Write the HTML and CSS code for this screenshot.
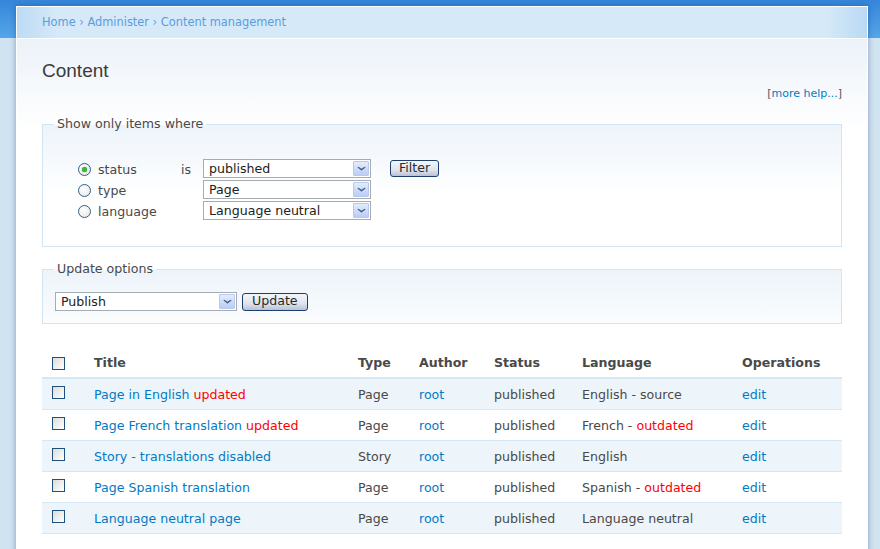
FILE: index.html
```html
<!DOCTYPE html>
<html lang="en">
<head>
    <meta charset="UTF-8">
    <title>Content</title>
    <link rel="stylesheet" href="styles.css">
</head>
<body>

<div class="page">
    <div class="breadcrumb">
        <a href="#">Home</a> › <a href="#">Administer</a> › <a href="#">Content management</a>
    </div>
    <div class="main">
        <h2>Content</h2>
        <div class="more-help">[<a href="#">more help...</a>]</div>

        <fieldset class="filter-box">
            <legend>Show only items where</legend>
            <div class="filters">
                <div class="radios">
                    <label class="radio-row"><span class="radio checked"></span>status</label>
                    <label class="radio-row"><span class="radio"></span>type</label>
                    <label class="radio-row"><span class="radio"></span>language</label>
                </div>
                <div class="is">is</div>
                <div class="selects">
                    <div class="select">published<span class="arrow"></span></div>
                    <div class="select">Page<span class="arrow"></span></div>
                    <div class="select">Language neutral<span class="arrow"></span></div>
                </div>
                <div class="actions">
                    <span class="button">Filter</span>
                </div>
            </div>
        </fieldset>

        <fieldset class="update-box">
            <legend>Update options</legend>
            <div class="update-row">
                <div class="select wide">Publish<span class="arrow"></span></div>
                <span class="button">Update</span>
            </div>
        </fieldset>

        <table class="content-table">
            <thead>
                <tr>
                    <th class="col-check"><span class="checkbox"></span></th>
                    <th class="col-title">Title</th>
                    <th class="col-type">Type</th>
                    <th class="col-author">Author</th>
                    <th class="col-status">Status</th>
                    <th class="col-lang">Language</th>
                    <th class="col-ops">Operations</th>
                </tr>
            </thead>
            <tbody>
                <tr class="odd">
                    <td><span class="checkbox"></span></td>
                    <td><a href="#">Page in English</a> <span class="marker">updated</span></td>
                    <td>Page</td>
                    <td><a href="#">root</a></td>
                    <td>published</td>
                    <td>English - source</td>
                    <td><a href="#">edit</a></td>
                </tr>
                <tr class="even">
                    <td><span class="checkbox"></span></td>
                    <td><a href="#">Page French translation</a> <span class="marker">updated</span></td>
                    <td>Page</td>
                    <td><a href="#">root</a></td>
                    <td>published</td>
                    <td>French - <span class="marker">outdated</span></td>
                    <td><a href="#">edit</a></td>
                </tr>
                <tr class="odd">
                    <td><span class="checkbox"></span></td>
                    <td><a href="#">Story - translations disabled</a></td>
                    <td>Story</td>
                    <td><a href="#">root</a></td>
                    <td>published</td>
                    <td>English</td>
                    <td><a href="#">edit</a></td>
                </tr>
                <tr class="even">
                    <td><span class="checkbox"></span></td>
                    <td><a href="#">Page Spanish translation</a></td>
                    <td>Page</td>
                    <td><a href="#">root</a></td>
                    <td>published</td>
                    <td>Spanish - <span class="marker">outdated</span></td>
                    <td><a href="#">edit</a></td>
                </tr>
                <tr class="odd">
                    <td><span class="checkbox"></span></td>
                    <td><a href="#">Language neutral page</a></td>
                    <td>Page</td>
                    <td><a href="#">root</a></td>
                    <td>published</td>
                    <td>Language neutral</td>
                    <td><a href="#">edit</a></td>
                </tr>
            </tbody>
        </table>
    </div>
</div>

</body>
</html>
```

FILE: styles.css
```css
/* page de base */
body {
    margin: 0;
    padding: 0;
    font-family: "DejaVu Sans", Verdana, sans-serif;
    font-size: 12.6px;
    color: #494949;
    background: linear-gradient(#3586da, #55a5e9 38px, #d0e3f1 38px) no-repeat;
    background-color: #d0e3f1;
    height: 549px;
    overflow: hidden;
}

a {
    color: #027ac6;
    text-decoration: none;
}

.page {
    margin: 6px 12px 0 16px;
    border-left: 1px solid #fff;
    border-right: 1px solid #fff;
    border-top: 1px solid #fff;
    box-shadow: 0 0 6px rgba(0, 30, 90, 0.35);
    background: #fff;
    height: 560px;
}

.breadcrumb {
    height: 31px;
    line-height: 31px;
    padding-left: 25px;
    font-size: 11.4px;
    color: #6aa3dc;
    background: linear-gradient(to right, #bcdbf4, #d5e9f8 40px, #d5e9f8 calc(100% - 40px), #b9d9f4);
    border-bottom: 1px solid #fff;
}

.breadcrumb a {
    color: #5d9cdc;
}

.main {
    padding: 0 25px;
    background: linear-gradient(#ecf2f9, #fff 90px) no-repeat;
}

h2 {
    margin: 0;
    padding-top: 21px;
    font-family: "Liberation Sans", Arial, sans-serif;
    font-weight: normal;
    font-size: 19px;
    line-height: 22px;
    color: #3b3b3b;
}

.more-help {
    text-align: right;
    font-size: 11px;
    margin-top: 4px;
    line-height: 16px;
    color: #555;
}

/* fieldsets */
fieldset {
    margin: 0;
    border: 1px solid #d3e5f2;
    background: linear-gradient(#edf4fa, #fff 70px);
    padding: 0 12px;
}

legend {
    padding: 0 3px;
    margin-left: -1px;
    font-size: 12.6px;
    line-height: 16px;
}

.filter-box {
    margin-top: 14px;
    height: 129px;
}

.filters {
    display: flex;
    padding-left: 23px;
    padding-top: 27px;
}

.radios {
    width: 103px;
}

.radio-row {
    display: flex;
    align-items: center;
    height: 21px;
}

.radio {
    width: 11px;
    height: 11px;
    border: 1px solid #2f5f8e;
    border-radius: 50%;
    background: radial-gradient(circle at 40% 35%, #fff, #e4e4e0);
    margin-right: 7px;
    position: relative;
}

.radio.checked::after {
    content: "";
    position: absolute;
    left: 3px;
    top: 3px;
    width: 5px;
    height: 5px;
    border-radius: 50%;
    background: #3cb83c;
    box-shadow: 0 0 1px #1a8a1a;
}

.is {
    width: 22px;
    height: 21px;
    line-height: 21px;
}

.selects {
    width: 168px;
}

.select {
    position: relative;
    box-sizing: border-box;
    height: 19px;
    margin-bottom: 2px;
    border: 1px solid #a5acb2;
    background: #fff;
    line-height: 17px;
    padding-left: 5px;
    color: #222;
}

.arrow {
    position: absolute;
    right: 1px;
    top: 1px;
    width: 14px;
    height: 13px;
    border: 1px solid #b8c8ee;
    border-radius: 1px;
    background: linear-gradient(#e3ecfd, #bacdf5);
}

.arrow::after {
    content: "";
    position: absolute;
    left: 4px;
    top: 2px;
    width: 5px;
    height: 5px;
    border-right: 2px solid #4d6185;
    border-bottom: 2px solid #4d6185;
    transform: scale(0.85, 0.6) rotate(45deg);
}

.actions {
    padding-left: 19px;
    padding-top: 1px;
}

.button {
    display: inline-block;
    box-sizing: border-box;
    height: 17px;
    line-height: 14px;
    padding: 0 8px;
    border: 1px solid #1d3f6e;
    border-radius: 3px;
    background: linear-gradient(#f4f6fb, #dfe3ec 60%, #b8c2d6);
    color: #2a2a2a;
    font-size: 12.6px;
}

.update-box {
    margin-top: 14px;
    height: 61px;
}

.update-row {
    display: flex;
    align-items: flex-start;
    padding-top: 15px;
}

.select.wide {
    width: 182px;
    margin-right: 5px;
}

.update-row .button {
    margin-top: 1px;
    height: 18px;
    padding: 0 9px;
}

/* tableau */
.content-table {
    width: 100%;
    margin-top: 31px;
    border-collapse: collapse;
}

.content-table th {
    text-align: left;
    font-weight: bold;
    height: 22px;
    vertical-align: top;
    padding: 0 0 0 10px;
    border-bottom: 2px solid #d3e7f4;
}

.content-table td {
    height: 30px;
    padding: 0 0 0 10px;
    border-bottom: 1px solid #d3e7f4;
    vertical-align: middle;
}

.content-table th .checkbox {
    margin-top: -1px;
}

tr.odd td {
    background: #edf5fa;
}

.checkbox {
    display: inline-block;
    width: 11px;
    height: 11px;
    border: 1px solid #1c5180;
    background: linear-gradient(135deg, #dcdcd7, #fff);
    vertical-align: middle;
    margin-top: -5px;
}

.marker {
    color: #ff0000;
}

.col-check { width: 32px; }
.col-title { width: 254px; }
.col-type { width: 51px; }
.col-author { width: 65px; }
.col-status { width: 78px; }
.col-lang { width: 150px; }
```
